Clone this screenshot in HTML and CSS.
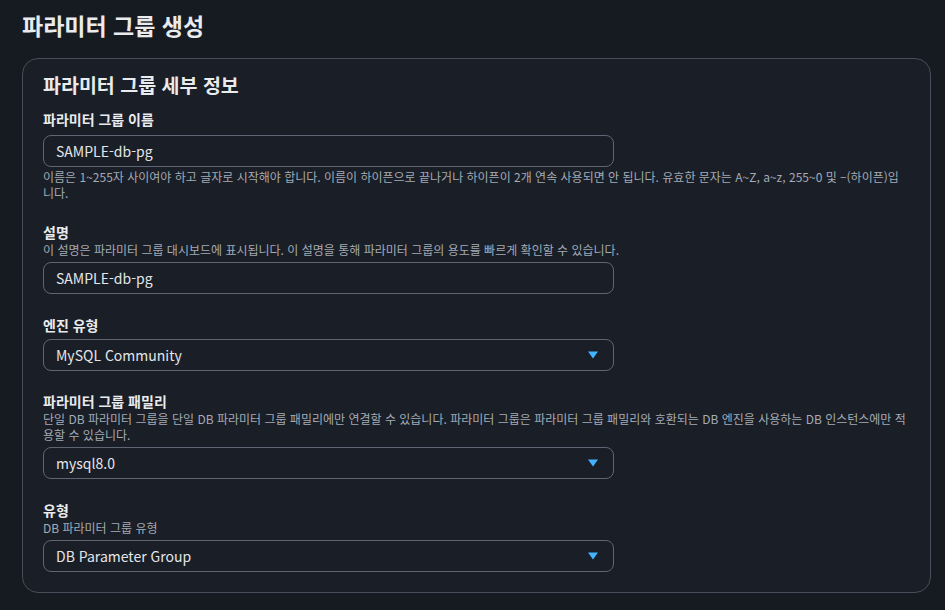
FILE: index.html
```html
<!DOCTYPE html>
<html lang="ko">
<head>
<meta charset="utf-8">
<link rel="stylesheet" href="styles.css">
</head>
<body>
<div class="page">
  <h1 class="title">파라미터 그룹 생성</h1>
  <section class="card">
    <h2 class="card-title">파라미터 그룹 세부 정보</h2>

    <div class="field">
      <div class="label">파라미터 그룹 이름</div>
      <div class="input input-first">SAMPLE-db-pg</div>
      <div class="hint">이름은 1~255자 사이여야 하고 글자로 시작해야 합니다. 이름이 하이픈으로 끝나거나 하이픈이 2개 연속 사용되면 안 됩니다. 유효한 문자는 A~Z, a~z, 255~0 및 –(하이픈)입니다.</div>
    </div>

    <div class="field">
      <div class="label">설명</div>
      <div class="desc">이 설명은 파라미터 그룹 대시보드에 표시됩니다. 이 설명을 통해 파라미터 그룹의 용도를 빠르게 확인할 수 있습니다.</div>
      <div class="input">SAMPLE-db-pg</div>
    </div>

    <div class="field field-tight">
      <div class="label">엔진 유형</div>
      <div class="input select"><span>MySQL Community</span><svg class="caret" width="10" height="8" viewBox="0 0 10 8"><path d="M0 0.5h10L5 7.5z" fill="#42b4ff"/></svg></div>
    </div>

    <div class="field">
      <div class="label">파라미터 그룹 패밀리</div>
      <div class="desc">단일 DB 파라미터 그룹을 단일 DB 파라미터 그룹 패밀리에만 연결할 수 있습니다. 파라미터 그룹은 파라미터 그룹 패밀리와 호환되는 DB 엔진을 사용하는 DB 인스턴스에만 적용할 수 있습니다.</div>
      <div class="input select"><span>mysql8.0</span><svg class="caret" width="10" height="8" viewBox="0 0 10 8"><path d="M0 0.5h10L5 7.5z" fill="#42b4ff"/></svg></div>
    </div>

    <div class="field">
      <div class="label">유형</div>
      <div class="desc">DB 파라미터 그룹 유형</div>
      <div class="input select"><span>DB Parameter Group</span><svg class="caret" width="10" height="8" viewBox="0 0 10 8"><path d="M0 0.5h10L5 7.5z" fill="#42b4ff"/></svg></div>
    </div>
  </section>
</div>
</body>
</html>
```

FILE: styles.css
```css
* { box-sizing: border-box; }
html, body {
  margin: 0;
  padding: 0;
  background: #161a21;
  font-family: "Noto Sans CJK KR", "Noto Sans", sans-serif;
  color: #d1d5db;
}
.page {
  padding: 8px 14px 0 22px;
}
.title {
  margin: 0;
  font-size: 23px;
  line-height: 34px;
  font-weight: 700;
  color: #e9ebed;
}
.card {
  margin-top: 16px;
  border: 1px solid #474e5a;
  border-radius: 16px;
  background: #1a1e27;
  padding: 12px 20px 20px 20px;
}
.card-title {
  margin: 0 0 10px 0;
  font-size: 19.5px;
  line-height: 28px;
  font-weight: 700;
  color: #e9ebed;
}
.field {
  display: flex;
  flex-direction: column;
  margin-bottom: 21px;
}
.field-tight { margin-bottom: 20px; }
.field:last-child { margin-bottom: 0; }
.label {
  font-size: 14px;
  line-height: 20px;
  font-weight: 700;
  color: #e9ebed;
}
.desc, .hint {
  font-size: 12px;
  line-height: 16px;
  color: #a4abb5;
}
.hint { max-width: 860px; }
.label + .input { margin-top: 4px; }
.label + .input-first { margin-top: 6px; }
.desc + .input { margin-top: 4px; }
.input + .hint { margin-top: 2px; }
.input {
  width: 571px;
  height: 32px;
  border: 1px solid #5f6673;
  border-radius: 8px;
  padding: 0 12px;
  display: flex;
  align-items: center;
  justify-content: space-between;
  font-size: 14px;
  color: #e3e6e9;
}
.caret { margin-right: 3px; }
```
